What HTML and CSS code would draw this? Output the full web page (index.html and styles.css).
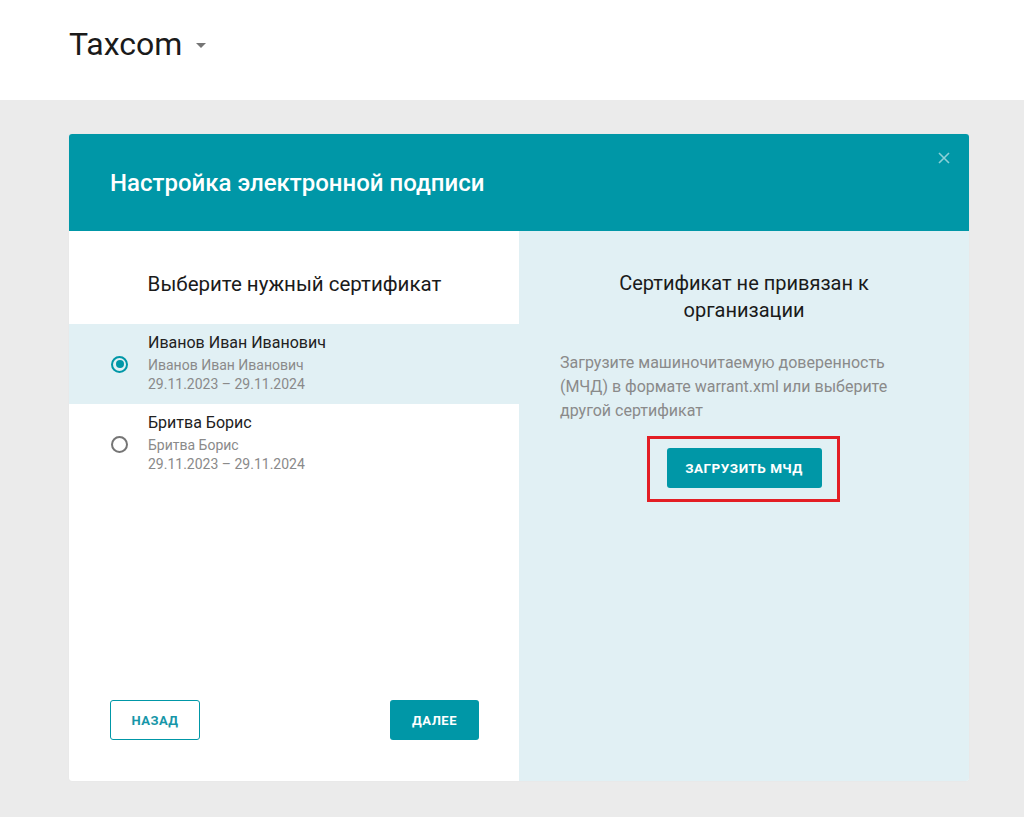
FILE: index.html
```html
<!DOCTYPE html>
<html lang="ru">
<head>
<meta charset="utf-8">
<link rel="stylesheet" href="styles.css">
</head>
<body>
<header class="topbar">
  <div class="brand">Taxcom <span class="caret"></span></div>
</header>
<main class="page">
  <section class="card">
    <div class="card-head">
      <h1 class="card-title">Настройка электронной подписи</h1>
      <span class="close">
        <svg width="12" height="12" viewBox="0 0 12 12"><path d="M1 1L11 11M11 1L1 11" stroke="currentColor" stroke-width="1.6" fill="none"/></svg>
      </span>
    </div>
    <div class="card-body">
      <div class="left">
        <h2 class="left-title">Выберите нужный сертификат</h2>
        <ul class="certs">
          <li class="cert selected">
            <span class="radio on"></span>
            <div class="cert-info">
              <div class="cert-name">Иванов Иван Иванович</div>
              <div class="cert-sub">Иванов Иван Иванович</div>
              <div class="cert-sub">29.11.2023 – 29.11.2024</div>
            </div>
          </li>
          <li class="cert">
            <span class="radio"></span>
            <div class="cert-info">
              <div class="cert-name">Бритва Борис</div>
              <div class="cert-sub">Бритва Борис</div>
              <div class="cert-sub">29.11.2023 – 29.11.2024</div>
            </div>
          </li>
        </ul>
        <div class="actions">
          <button class="btn btn-outline">НАЗАД</button>
          <button class="btn btn-fill btn-next">ДАЛЕЕ</button>
        </div>
      </div>
      <div class="right">
        <h2 class="right-title">Сертификат не привязан к организации</h2>
        <p class="right-text">Загрузите машиночитаемую доверенность (МЧД) в формате warrant.xml или выберите другой сертификат</p>
        <div class="highlight">
          <button class="btn btn-fill btn-upload">ЗАГРУЗИТЬ МЧД</button>
        </div>
      </div>
    </div>
  </section>
</main>
</body>
</html>
```
FILE: styles.css
```css
* { box-sizing: border-box; }
html, body { margin: 0; padding: 0; }
body {
  font-family: Roboto, "Noto Sans", Arial, sans-serif;
  background: #ebebeb;
  color: #212121;
  min-height: 817px;
}
.topbar {
  height: 100px;
  background: #fff;
  display: flex;
  align-items: center;
  padding-left: 69px;
}
.brand {
  font-size: 32px;
  font-weight: 400;
  color: #1a1a1a;
  display: flex;
  align-items: center;
  margin-top: -12px;
}
.caret {
  display: inline-block;
  width: 0; height: 0;
  border-left: 5px solid transparent;
  border-right: 5px solid transparent;
  border-top: 5px solid #757575;
  margin-left: 14px;
  margin-top: 2px;
}
.page {
  padding: 34px 0 36px 69px;
}
.card {
  width: 900px;
  height: 647px;
  background: #fff;
  border-radius: 3px;
  overflow: hidden;
  display: flex;
  flex-direction: column;
  box-shadow: 0 0 1px rgba(0,0,0,0.08);
}
.card-head {
  position: relative;
  height: 97px;
  background: #0097a7;
  display: flex;
  align-items: center;
  padding-left: 41px;
  flex-shrink: 0;
}
.card-title {
  margin: 0;
  color: #fff;
  font-size: 24px;
  font-weight: 500;
}
.close {
  position: absolute;
  right: 19px;
  top: 18px;
  color: rgba(255,255,255,0.55);
  display: flex;
}
.card-body {
  flex: 1;
  display: flex;
}
.left {
  width: 450px;
  display: flex;
  flex-direction: column;
  padding-top: 40px;
  padding-bottom: 41px;
}
.left-title {
  margin: 0 0 27px;
  text-align: center;
  font-size: 20.5px;
  line-height: 26px;
  font-weight: 400;
  color: #1a1a1a;
  padding-left: 1px;
}
.certs {
  list-style: none;
  margin: 0;
  padding: 0;
}
.cert {
  display: flex;
  align-items: center;
  padding: 8px 0 10px 42px;
  height: 80px;
}
.cert.selected { background: #e1f0f4; }
.radio {
  width: 17px; height: 17px;
  border-radius: 50%;
  border: 2px solid #757575;
  position: relative;
  flex-shrink: 0;
  margin-right: 20px;
  margin-top: 2px;
}
.radio.on { border-color: #0097a7; }
.radio.on::after {
  content: "";
  position: absolute;
  left: 2.5px; top: 2.5px;
  width: 8px; height: 8px;
  border-radius: 50%;
  background: #0097a7;
}
.cert-info { display: flex; flex-direction: column; }
.cert-name {
  font-size: 16px;
  line-height: 22px;
  color: #212121;
  margin-bottom: 2px;
}
.cert-sub {
  font-size: 14px;
  line-height: 19px;
  color: #8a8a8a;
}
.actions {
  margin-top: auto;
  display: flex;
  justify-content: space-between;
  padding: 0 40px 0 41px;
}
.btn {
  font-family: Roboto, "Noto Sans", Arial, sans-serif;
  font-size: 13px;
  font-weight: 700;
  letter-spacing: 0.5px;
  height: 40px;
  border-radius: 3px;
  cursor: pointer;
}
.btn-outline {
  width: 90px;
  background: #fff;
  border: 1px solid #0097a7;
  color: #1796a8;
}
.btn-fill {
  background: #0097a7;
  border: none;
  color: #fff;
}
.btn-next { width: 89px; }
.right {
  width: 450px;
  background: #e1f0f4;
  padding: 39px 41px 0;
  display: flex;
  flex-direction: column;
  align-items: center;
}
.right-title {
  margin: 0;
  text-align: center;
  font-size: 20px;
  line-height: 27px;
  font-weight: 400;
  color: #1a1a1a;
  width: 300px;
}
.right-text {
  margin: 27px 0 13px;
  font-size: 16px;
  line-height: 24px;
  color: #8a8a8a;
  width: 100%;
}
.highlight {
  border: 3px solid #e31e24;
  padding: 9px 15px 11px 17px;
  margin-right: 2px;
}
.btn-upload { width: 155px; font-size: 13.5px; }
```
